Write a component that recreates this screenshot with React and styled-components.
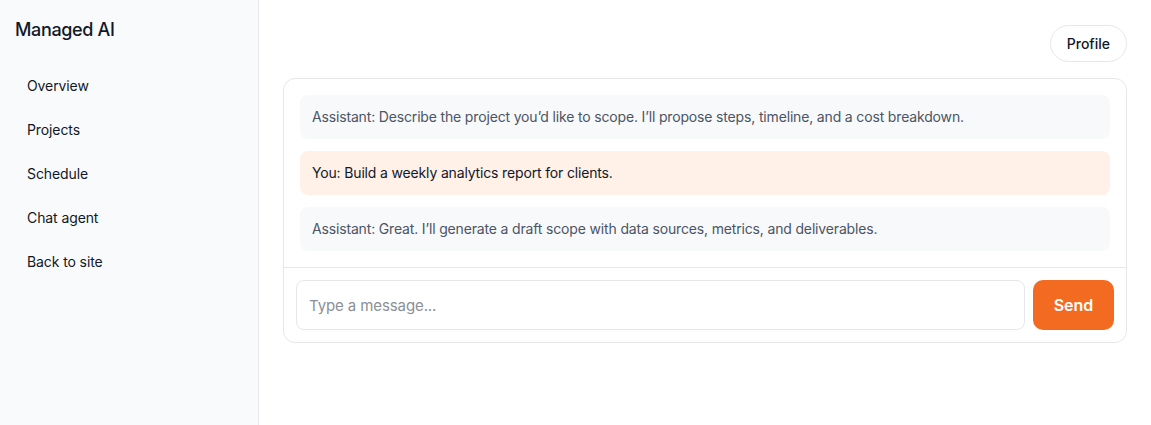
import React from 'react';
import styled, { createGlobalStyle } from 'styled-components';

const GlobalStyle = createGlobalStyle`
	html, body {
		margin: 0;
		padding: 0;
		background: #fff;
		font-family: Inter, 'Noto Sans', sans-serif;
		color: #111827;
	}
	* {
		box-sizing: border-box;
	}
`;

const Shell = styled.div`
	display: flex;
	min-height: 425px;
`;

const Sidebar = styled.aside`
	width: 259px;
	flex-shrink: 0;
	background: #f9fafb;
	border-right: 1px solid #e5e7eb;
	padding: 18px 16px 18px 15px;
`;

const Brand = styled.div`
	font-size: 18px;
	font-weight: 500;
	line-height: 24px;
	letter-spacing: -0.35px;
	margin-bottom: 24px;
`;

const Nav = styled.nav`
	display: flex;
	flex-direction: column;
	gap: 4px;
`;

const NavItem = styled.a`
	display: block;
	padding: 10px 12px;
	font-size: 14px;
	line-height: 20px;
	letter-spacing: -0.1px;
	color: #111827;
	text-decoration: none;
	border-radius: 8px;
`;

const Main = styled.main`
	flex: 1;
	padding: 25px 24px 24px 24px;
	display: flex;
	flex-direction: column;
	gap: 16px;
`;

const TopBar = styled.div`
	display: flex;
	justify-content: flex-end;
`;

const PillButton = styled.button`
	height: 37px;
	padding: 0 16px;
	border: 1px solid #e5e7eb;
	border-radius: 999px;
	background: #fff;
	font-family: inherit;
	font-size: 14px;
	font-weight: 500;
	color: #111827;
`;

const Card = styled.section`
	border: 1px solid #e5e7eb;
	border-radius: 12px;
	background: #fff;
`;

const Messages = styled.div`
	display: flex;
	flex-direction: column;
	gap: 12px;
	padding: 16px;
	border-bottom: 1px solid #e5e7eb;
`;

const Message = styled.div`
	padding: 12px;
	border-radius: 8px;
	font-size: 14px;
	line-height: 20px;
	letter-spacing: -0.16px;
	background: ${(p) => (p.$mine ? '#fff1e7' : '#f8f9fb')};
	color: ${(p) => (p.$mine ? '#111827' : '#4b5563')};
`;

const Composer = styled.form`
	display: flex;
	gap: 8px;
	padding: 12px;
`;

const Input = styled.input`
	flex: 1;
	height: 50px;
	padding: 0 12px;
	border: 1px solid #e5e7eb;
	border-radius: 8px;
	font-family: inherit;
	font-size: 15px;
	letter-spacing: -0.1px;
	color: #111827;
	outline: none;
	&::placeholder {
		color: #8b8f97;
	}
`;

const SendButton = styled.button`
	width: 81px;
	height: 50px;
	border: none;
	border-radius: 10px;
	background: #f26b21;
	color: #fff;
	font-family: inherit;
	font-size: 16px;
	font-weight: 600;
`;

const navLinks = ['Overview', 'Projects', 'Schedule', 'Chat agent', 'Back to site'];

const messages = [
	{ mine: false, text: 'Assistant: Describe the project you\u2019d like to scope. I\u2019ll propose steps, timeline, and a cost breakdown.' },
	{ mine: true, text: 'You: Build a weekly analytics report for clients.' },
	{ mine: false, text: 'Assistant: Great. I\u2019ll generate a draft scope with data sources, metrics, and deliverables.' },
];

export default function App() {
	return (
		<>
			<GlobalStyle />
			<Shell>
				<Sidebar>
					<Brand>Managed AI</Brand>
					<Nav>
						{navLinks.map((l) => (
							<NavItem key={l} href="#">
								{l}
							</NavItem>
						))}
					</Nav>
				</Sidebar>
				<Main>
					<TopBar>
						<PillButton type="button">Profile</PillButton>
					</TopBar>
					<Card>
						<Messages>
							{messages.map((m, i) => (
								<Message key={i} $mine={m.mine}>
									{m.text}
								</Message>
							))}
						</Messages>
						<Composer onSubmit={(e) => e.preventDefault()}>
							<Input placeholder="Type a message..." />
							<SendButton type="submit">Send</SendButton>
						</Composer>
					</Card>
				</Main>
			</Shell>
		</>
	);
}
